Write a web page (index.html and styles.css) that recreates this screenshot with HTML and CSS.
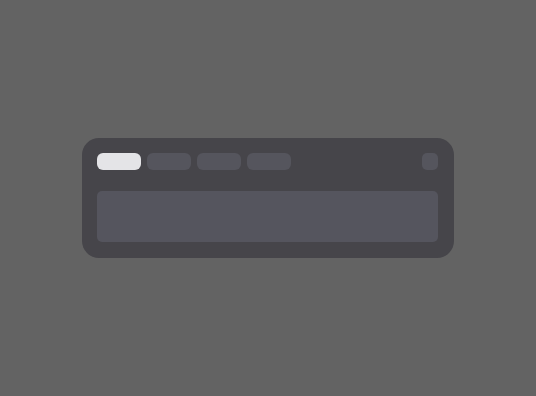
FILE: index.html
```html
<!DOCTYPE html>
<html>
<head>
<meta charset="utf-8">
<link rel="stylesheet" href="styles.css">
</head>
<body>
<div class="card">
  <div class="toolbar">
    <div class="tabs">
      <div class="tab active"></div>
      <div class="tab"></div>
      <div class="tab"></div>
      <div class="tab"></div>
    </div>
    <div class="action"></div>
  </div>
  <div class="content"></div>
</div>
</body>
</html>
```
FILE: styles.css
```css
html, body {
  margin: 0;
  height: 100%;
}
body {
  background: #636363;
  display: flex;
  align-items: center;
  justify-content: center;
  font-family: "Liberation Sans", sans-serif;
}
.card {
  width: 372px;
  height: 120px;
  box-sizing: border-box;
  background: #46454a;
  border-radius: 17px;
  padding: 15px 16px 16px 15px;
  display: flex;
  flex-direction: column;
  gap: 21px;
}
.toolbar {
  display: flex;
  justify-content: space-between;
  align-items: flex-start;
  height: 17px;
}
.tabs {
  display: flex;
  gap: 6px;
}
.tab {
  width: 44px;
  height: 17px;
  border-radius: 6px;
  background: #55555d;
}
.tab.active {
  background: #e4e4e7;
}
.action {
  width: 16px;
  height: 17px;
  border-radius: 5px;
  background: #55555d;
}
.content {
  flex: 1;
  border-radius: 5px;
  background: #55555e;
}
```
